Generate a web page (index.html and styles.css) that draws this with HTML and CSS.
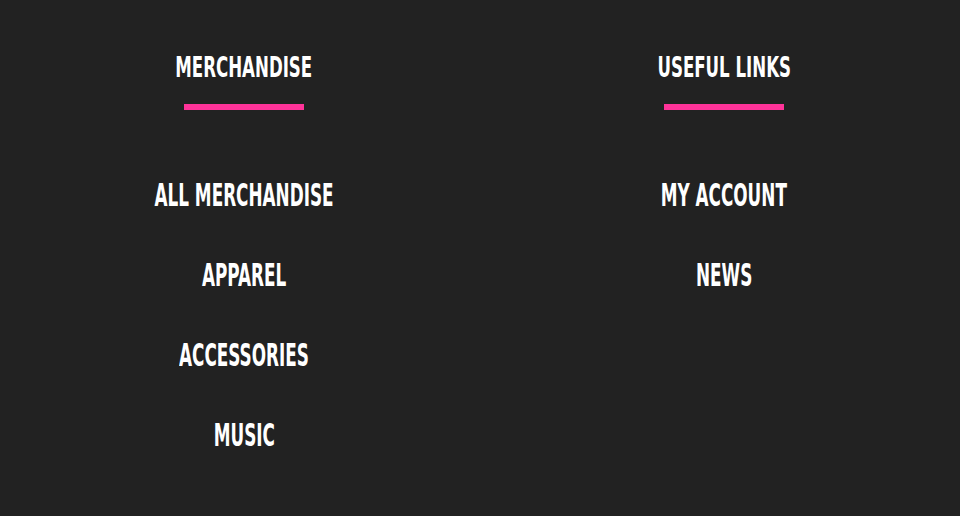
FILE: index.html
```html
<!DOCTYPE html>
<html lang="en">
<head>
<meta charset="utf-8">
<title>Footer</title>
<link rel="stylesheet" href="styles.css">
</head>
<body>
<footer class="footer">
  <section class="col">
    <h2 class="col-title"><span class="squeeze">Merchandise</span></h2>
    <div class="bar"></div>
    <ul class="links">
      <li><a href="#"><span class="squeeze">All Merchandise</span></a></li>
      <li><a href="#"><span class="squeeze">Apparel</span></a></li>
      <li><a href="#"><span class="squeeze">Accessories</span></a></li>
      <li><a href="#"><span class="squeeze">Music</span></a></li>
    </ul>
  </section>
  <section class="col">
    <h2 class="col-title"><span class="squeeze">Useful Links</span></h2>
    <div class="bar"></div>
    <ul class="links">
      <li><a href="#"><span class="squeeze">My Account</span></a></li>
      <li><a href="#"><span class="squeeze">News</span></a></li>
    </ul>
  </section>
</footer>
</body>
</html>
```

FILE: styles.css
```css
html, body {
  margin: 0;
  padding: 0;
  background: #222222;
  height: 100%;
}
body {
  font-family: "DejaVu Sans Condensed", "Liberation Sans", sans-serif;
  font-weight: 700;
  color: #ffffff;
  text-transform: uppercase;
}
.footer {
  display: grid;
  grid-template-columns: 1fr 1fr;
  padding-top: 54px;
}
.col {
  display: flex;
  flex-direction: column;
  align-items: center;
  padding-left: 8px;
}
.col-title {
  margin: 0;
  font-size: 28px;
  line-height: 28px;
  font-weight: 700;
}
.squeeze {
  display: inline-block;
  white-space: nowrap;
}
.col-title .squeeze {
  transform: scaleX(0.66);
}
.links .squeeze {
  transform: scaleX(0.585);
}
.bar {
  width: 120px;
  height: 6px;
  background: #ff3399;
  margin-top: 22px;
}
.links {
  list-style: none;
  margin: 45px 0 0;
  padding: 0;
  display: flex;
  flex-direction: column;
  align-items: center;
}
.links li {
  font-size: 32px;
  line-height: 80px;
}
.links a {
  color: #ffffff;
  text-decoration: none;
}
```
